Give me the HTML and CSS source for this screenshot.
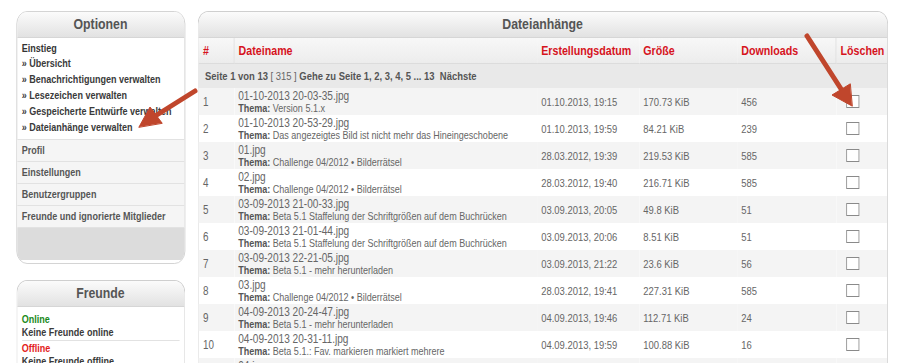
FILE: index.html
```html
<!DOCTYPE html>
<html lang="de">
  <head>
    <meta charset="utf-8">
    <title>Dateianhänge verwalten</title>
    <link rel="stylesheet" href="styles.css">
  </head>
  <body>
    <!-- The captured page is squeezed horizontally, so the layout is scaled as a whole -->
    <div class="page">
      <!-- Sidebar -->
      <div class="sidebar">
        <div class="panel">
          <div class="panel-header">Optionen</div>
          <div class="menu-group">
            <div class="menu-title">Einstieg</div>
            <a class="menu-link">» Übersicht</a>
            <a class="menu-link">» Benachrichtigungen verwalten</a>
            <a class="menu-link">» Lesezeichen verwalten</a>
            <a class="menu-link">» Gespeicherte Entwürfe verwalten</a>
            <a class="menu-link">» Dateianhänge verwalten</a>
          </div>
          <div class="menu-item">Profil</div>
          <div class="menu-item">Einstellungen</div>
          <div class="menu-item">Benutzergruppen</div>
          <div class="menu-item">Freunde und ignorierte Mitglieder</div>
          <div class="menu-filler"></div>
        </div>

        <div class="panel friends">
          <div class="panel-header">Freunde</div>
          <div class="friends-block">
            <div class="online">Online</div>
            <div>Keine Freunde online</div>
          </div>
          <div class="friends-block">
            <div class="offline">Offline</div>
            <div>Keine Freunde offline</div>
          </div>
        </div>
      </div>

      <!-- Attachments -->
      <div class="panel main">
        <div class="panel-header">Dateianhänge</div>
        <table class="attachments">
          <colgroup>
            <col class="col-num">
            <col class="col-name">
            <col class="col-date">
            <col class="col-size">
            <col class="col-dl">
            <col>
          </colgroup>
          <thead>
            <tr>
              <th class="sep">#</th>
              <th>Dateiname</th>
              <th>Erstellungsdatum</th>
              <th>Größe</th>
              <th class="sep">Downloads</th>
              <th>Löschen</th>
            </tr>
          </thead>
          <tbody>
            <tr class="pagination">
              <td colspan="6">Seite 1 von 13 <span class="count">[ 315 ]</span> Gehe zu Seite 1, 2, 3, 4, 5 ... 13 &nbsp;Nächste</td>
            </tr>
            <tr>
              <td>1</td>
              <td><div class="file">01-10-2013 20-03-35.jpg</div><div class="topic"><b>Thema:</b> Version 5.1.x</div></td>
              <td>01.10.2013, 19:15</td><td>170.73 KiB</td><td>456</td><td><span class="box"></span></td>
            </tr>
            <tr>
              <td>2</td>
              <td><div class="file">01-10-2013 20-53-29.jpg</div><div class="topic"><b>Thema:</b> Das angezeigtes Bild ist nicht mehr das Hineingeschobene</div></td>
              <td>01.10.2013, 19:59</td><td>84.21 KiB</td><td>239</td><td><span class="box"></span></td>
            </tr>
            <tr>
              <td>3</td>
              <td><div class="file">01.jpg</div><div class="topic"><b>Thema:</b> Challenge 04/2012 • Bilderrätsel</div></td>
              <td>28.03.2012, 19:39</td><td>219.53 KiB</td><td>585</td><td><span class="box"></span></td>
            </tr>
            <tr>
              <td>4</td>
              <td><div class="file">02.jpg</div><div class="topic"><b>Thema:</b> Challenge 04/2012 • Bilderrätsel</div></td>
              <td>28.03.2012, 19:40</td><td>216.71 KiB</td><td>585</td><td><span class="box"></span></td>
            </tr>
            <tr>
              <td>5</td>
              <td><div class="file">03-09-2013 21-00-33.jpg</div><div class="topic"><b>Thema:</b> Beta 5.1 Staffelung der Schriftgrößen auf dem Buchrücken</div></td>
              <td>03.09.2013, 20:05</td><td>49.8 KiB</td><td>51</td><td><span class="box"></span></td>
            </tr>
            <tr>
              <td>6</td>
              <td><div class="file">03-09-2013 21-01-44.jpg</div><div class="topic"><b>Thema:</b> Beta 5.1 Staffelung der Schriftgrößen auf dem Buchrücken</div></td>
              <td>03.09.2013, 20:06</td><td>8.51 KiB</td><td>51</td><td><span class="box"></span></td>
            </tr>
            <tr>
              <td>7</td>
              <td><div class="file">03-09-2013 22-21-05.jpg</div><div class="topic"><b>Thema:</b> Beta 5.1 - mehr herunterladen</div></td>
              <td>03.09.2013, 21:22</td><td>23.6 KiB</td><td>56</td><td><span class="box"></span></td>
            </tr>
            <tr>
              <td>8</td>
              <td><div class="file">03.jpg</div><div class="topic"><b>Thema:</b> Challenge 04/2012 • Bilderrätsel</div></td>
              <td>28.03.2012, 19:41</td><td>227.31 KiB</td><td>585</td><td><span class="box"></span></td>
            </tr>
            <tr>
              <td>9</td>
              <td><div class="file">04-09-2013 20-24-47.jpg</div><div class="topic"><b>Thema:</b> Beta 5.1 - mehr herunterladen</div></td>
              <td>04.09.2013, 19:46</td><td>112.71 KiB</td><td>24</td><td><span class="box"></span></td>
            </tr>
            <tr>
              <td>10</td>
              <td><div class="file">04-09-2013 20-31-11.jpg</div><div class="topic"><b>Thema:</b> Beta 5.1.: Fav. markieren markiert mehrere</div></td>
              <td>04.09.2013, 19:59</td><td>100.88 KiB</td><td>16</td><td><span class="box"></span></td>
            </tr>
            <tr>
              <td>11</td>
              <td><div class="file">04.jpg</div><div class="topic"><b>Thema:</b> Challenge 04/2012 • Bilderrätsel</div></td>
              <td>28.03.2012, 19:42</td><td>212.40 KiB</td><td>585</td><td><span class="box"></span></td>
            </tr>
          </tbody>
        </table>
      </div>
    </div>

    <!-- Annotation arrows drawn over the screenshot -->
    <svg class="arrows" width="900" height="363" viewBox="0 0 900 363">
      <g fill="#c0462c" stroke="#c0462c" stroke-linecap="round">
        <line x1="195" y1="91" x2="152" y2="118" stroke-width="5"/>
        <polygon points="139,127 150,107 162,123" stroke-width="1" stroke-linejoin="round"/>
        <line x1="807" y1="36" x2="843" y2="92" stroke-width="5"/>
        <polygon points="852,106 832,95 850,84" stroke-width="1" stroke-linejoin="round"/>
      </g>
    </svg>
  </body>
</html>
```

FILE: styles.css
```css
body {
  margin: 0;
  font-family: "Liberation Sans", Arial, sans-serif;
  color: #555;
  background: #fff;
  overflow: hidden;
}

/* 1097px wide layout squeezed to the 900px window */
.page {
  width: 1097px;
  box-sizing: border-box;
  display: flex;
  gap: 15px;
  padding: 11px 14px 0 19.5px;
  transform: scaleX(0.82);
  transform-origin: 0 0;
}

.sidebar {
  width: 206px;
  flex-shrink: 0;
  display: flex;
  flex-direction: column;
  gap: 16px;
}

/* Panels with rounded gradient header */
.panel {
  border: 1px solid #cfcfcf;
  border-radius: 13px;
  background: #fff;
  overflow: hidden;
}

.panel-header {
  height: 25px;
  line-height: 24px;
  text-align: center;
  font-size: 15px;
  font-weight: bold;
  color: #555;
  background: linear-gradient(#fbfbfb, #e2e2e2);
  border-bottom: 1px solid #d6d6d6;
}

.menu-group {
  padding: 3px 6px 4px 6px;
  border-bottom: 1px solid #e2e2e2;
  white-space: nowrap;
}

.menu-title {
  font-weight: bold;
  font-size: 11px;
  color: #333;
  line-height: 14px;
}

.menu-link {
  display: block;
  color: #3a3a3a;
  font-weight: bold;
  line-height: 16px;
  font-size: 11px;
}

.menu-item {
  height: 21px;
  line-height: 21px;
  padding: 0 6px;
  font-size: 11px;
  font-weight: bold;
  color: #555;
  background: #f5f5f5;
  border-bottom: 1px solid #e2e2e2;
  white-space: nowrap;
}

.menu-filler {
  height: 32px;
  background: #dcdcdc;
  margin-bottom: 3px;
}

.friends {
  border-bottom: none;
  border-radius: 13px 13px 0 0;
  height: 120px;
}

.friends-block {
  margin: 0 6px;
  padding: 6px 0 1px;
  font-size: 11px;
  font-weight: bold;
  color: #3a3a3a;
  line-height: 13px;
}

.friends-block + .friends-block {
  border-top: 1px solid #e2e2e2;
  padding-top: 1px;
}

.online { color: #1a8a1a; }
.offline { color: #e3201b; }

/* Main attachments panel */
.main {
  flex: 1;
  border-bottom: none;
  border-radius: 13px 13px 0 0;
  height: 360px;
}

.attachments {
  width: 100%;
  table-layout: fixed;
  border-collapse: collapse;
  font-size: 11.5px;
}

.col-num { width: 44px; }
.col-name { width: 369.5px; }
.col-date { width: 124.5px; }
.col-size { width: 119.5px; }
.col-dl { width: 120.5px; }

.attachments th {
  height: 25px;
  text-align: left;
  color: #d6131d;
  font-weight: bold;
  font-size: 13px;
  padding: 0 5px;
  background: linear-gradient(#f8f8f8, #ececec);
  border-bottom: 1px solid #dcdcdc;
}

.attachments th:first-child {
  padding-left: 6px;
}

.attachments th.sep {
  border-right: 1px solid #dcdcdc;
}

.attachments td {
  height: 27px;
  padding: 0 5px;
  color: #666;
  vertical-align: middle;
  white-space: nowrap;
  overflow: hidden;
}

.attachments td:first-child {
  padding-left: 6px;
  font-size: 12px;
}

.attachments tbody tr:nth-child(even) {
  background: #f4f4f4;
}

.attachments tr.pagination td {
  height: 24px;
  background: #e9e9e9;
  color: #555;
  font-size: 11.5px;
  font-weight: bold;
  padding-left: 8.5px;
}

.pagination .count {
  font-weight: normal;
  color: #666;
}

.file {
  font-size: 12.3px;
  line-height: 12px;
  color: #666;
}

.topic {
  font-size: 11px;
  line-height: 12px;
  color: #666;
}

.topic b {
  color: #555;
}

.box {
  display: block;
  width: 14px;
  height: 11px;
  margin-left: 7px;
  border: 1px solid #8a8a8a;
  background: #fff;
}

.arrows {
  position: absolute;
  left: 0;
  top: 0;
  pointer-events: none;
}
```
